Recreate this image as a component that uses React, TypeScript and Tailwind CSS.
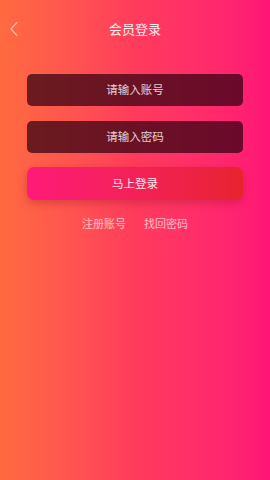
import React from "react";

export default function App() {
  return (
    <div
      className="w-[270px] h-[480px] bg-gradient-to-r from-[#ff6a3f] via-[#ff3b5c] to-[#ff1577] text-white"
      style={{ fontFamily: '"Noto Sans CJK SC", "Noto Sans", sans-serif' }}
    >
      {/* Header */}
      <div className="relative h-[56px] flex items-center justify-center">
        <button className="absolute left-[7px] top-[20px] w-[14px] h-[18px] flex items-center justify-center">
          <svg width="10" height="16" viewBox="0 0 10 16" fill="none">
            <path d="M8 1.5 L2 8 L8 14.5" stroke="rgba(255,255,255,0.55)" strokeWidth="1.3" strokeLinecap="round" strokeLinejoin="round" />
          </svg>
        </button>
        <h1 className="text-[13px] leading-none text-white/90">会员登录</h1>
      </div>

      {/* Form */}
      <div className="px-[27px] pt-[18px] flex flex-col">
        <div className="h-[32px] rounded-[5px] bg-[rgba(50,0,16,0.72)] flex items-center justify-center text-[11.5px] text-white/80">
          请输入账号
        </div>
        <div className="mt-[15px] h-[32px] rounded-[5px] bg-[rgba(50,0,16,0.72)] flex items-center justify-center text-[11.5px] text-white/80">
          请输入密码
        </div>
        <button className="mt-[14px] h-[33px] rounded-[7px] bg-gradient-to-r from-[#ff1a78] to-[#e8232e] shadow-[0_3px_8px_rgba(150,20,40,0.35)] flex items-center justify-center text-[11.5px] text-white/90">
          马上登录
        </button>
        <div className="mt-[15px] flex justify-center gap-[18px] text-[11px] text-white/65">
          <span>注册账号</span>
          <span>找回密码</span>
        </div>
      </div>
    </div>
  );
}
